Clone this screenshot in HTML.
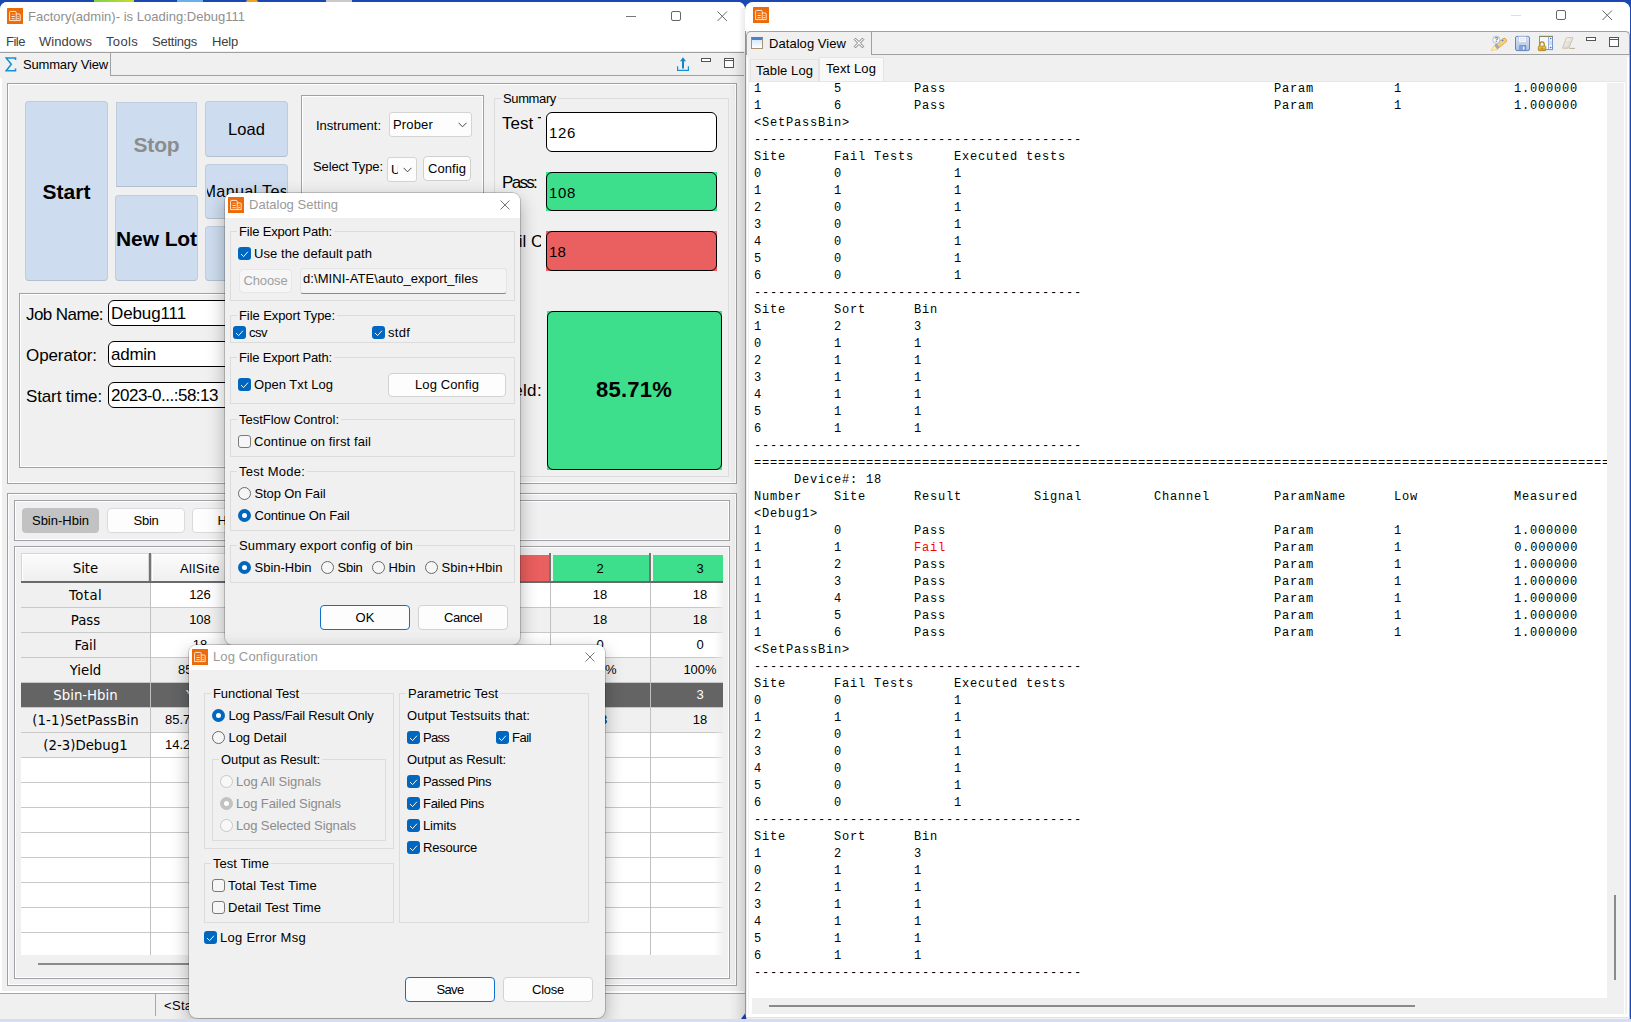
<!DOCTYPE html>
<html><head><meta charset="utf-8"><title>Factory</title>
<style>
html,body{margin:0;padding:0;}
body{width:1631px;height:1022px;position:relative;overflow:hidden;background:#1b47b3;font-family:"Liberation Sans",sans-serif;}
div,span.t,svg.a,pre{position:absolute;}
span.t{white-space:pre;display:block;}
pre{margin:0;}
</style></head><body>
<div style="left:0px;top:2px;width:745px;height:1017px;background:#f0f0f0;border-radius:7px 7px 0 0;overflow:hidden;"></div>
<div style="left:0px;top:78px;width:2px;height:915px;background:#fff;"></div>
<div style="left:0px;top:991px;width:744px;height:2px;background:#fff;"></div>
<div style="left:0px;top:2px;width:745px;height:49px;background:#fff;border-radius:7px 7px 0 0;"></div>
<svg class="a" style="left:7px;top:8px" width="16" height="16" viewBox="0 0 16 16"><rect width="16" height="16" rx="0.6" fill="#ec6a08"/><path d="M3.6 3.4h4.6q1 0 1 1v8.2h-6.6v-8.2q0-1 1-1zM9.2 6h3q1 0 1 1v5.6h-4" fill="none" stroke="#fff" stroke-opacity="0.92" stroke-width="0.9"/><path d="M4.5 6.3h3.2" stroke="#fff" stroke-opacity="0.45" stroke-width="0.9" fill="none"/><path d="M4.5 8.5h3.2M4.5 10.7h3.2M10.2 10.7h2" stroke="#fff" stroke-width="0.9" fill="none"/><path d="M10.2 8.6h2" stroke="#fff" stroke-opacity="0.6" stroke-width="0.8" fill="none"/></svg>
<span class="t" style="top:7.50px;line-height:18px;font-size:13px;color:#8f8f8f;letter-spacing:0.020px;left:28px;">Factory(admin)- is Loading:Debug111</span>
<svg class="a" style="left:626px;top:11px" width="102" height="11" viewBox="0 0 102 11"><path d="M0 5.5h10" stroke="#777" fill="none"/><rect x="45.5" y="0.5" width="9" height="9" rx="1.5" stroke="#666" fill="none"/><path d="M91.5 0.5l9.5 9.5M101 0.5l-9.5 9.5" stroke="#666" fill="none"/></svg>
<span class="t" style="top:32.50px;line-height:18px;font-size:13px;color:#404040;letter-spacing:-0.487px;left:6px;">File</span>
<span class="t" style="top:32.50px;line-height:18px;font-size:13px;color:#404040;letter-spacing:0.038px;left:39px;">Windows</span>
<span class="t" style="top:32.50px;line-height:18px;font-size:13px;color:#404040;letter-spacing:0.330px;left:106px;">Tools</span>
<span class="t" style="top:32.50px;line-height:18px;font-size:13px;color:#404040;letter-spacing:-0.247px;left:152px;">Settings</span>
<span class="t" style="top:32.50px;line-height:18px;font-size:13px;color:#404040;letter-spacing:-0.184px;left:212px;">Help</span>
<div style="left:0px;top:52px;width:744px;height:1px;background:#a0a0a0;"></div>
<div style="left:0px;top:75px;width:744px;height:1px;background:#a0a0a0;"></div>
<div style="left:0px;top:53px;width:111px;height:23px;background:#f0f0f0;border-right:1px solid #a0a0a0;box-sizing:border-box;"></div>
<svg class="a" style="left:5px;top:57px" width="12" height="15" viewBox="0 0 12 15"><path d="M10.5 3V1H1.2L6.3 7.3L1.2 13.8H10.5V11.6" fill="none" stroke="#1793d1" stroke-width="1.6"/></svg>
<span class="t" style="top:55.50px;line-height:18px;font-size:13px;color:#000;letter-spacing:-0.181px;left:23px;">Summary View</span>
<svg class="a" style="left:676px;top:56px" width="14" height="16" viewBox="0 0 14 16"><path d="M1.6 10.3v4.1h10.8v-4.1" fill="none" stroke="#1590d3" stroke-width="1.2"/><path d="M7 12.4V3.5" stroke="#0f86cc" stroke-width="2"/><path d="M4 5.3L7 1.2l3 4.1z" fill="#0f86cc"/></svg>
<div style="left:701px;top:58px;width:10px;height:4px;background:#fff;border:1px solid #555;box-sizing:border-box;"></div>
<div style="left:724px;top:58px;width:10px;height:10px;background:#fff;border:1px solid #555;box-sizing:border-box;"></div>
<div style="left:725px;top:60px;width:8px;height:1px;background:#555;"></div>
<div style="left:7px;top:83px;width:730px;height:401px;border:1px solid #a0a0a6;box-shadow:inset 0 0 0 1px #fff;box-sizing:border-box;"></div>
<div style="left:25px;top:101px;width:83px;height:180px;background:#cddcee;border-radius:4px;border:1px solid rgba(0,0,0,0.07);border-bottom-color:rgba(0,0,0,0.13);box-sizing:border-box;"></div>
<span class="t" style="top:176.50px;line-height:29px;font-size:21px;color:#000;letter-spacing:-0.009px;font-weight:bold;left:-133.5px;width:400px;text-align:center;">Start</span>
<div style="left:116px;top:102px;width:81px;height:85px;background:#cddcee;border-radius:4px;border:1px solid rgba(0,0,0,0.07);border-bottom-color:rgba(0,0,0,0.13);box-sizing:border-box;border-radius:0;"></div>
<span class="t" style="top:129.50px;line-height:29px;font-size:21px;color:#8c8c8c;letter-spacing:-0.164px;font-weight:bold;left:-43.5px;width:400px;text-align:center;">Stop</span>
<div style="left:115px;top:195px;width:83px;height:86px;background:#cddcee;border-radius:4px;border:1px solid rgba(0,0,0,0.07);border-bottom-color:rgba(0,0,0,0.13);box-sizing:border-box;overflow:hidden;"></div>
<span class="t" style="top:223.50px;line-height:29px;font-size:21px;color:#000;letter-spacing:-0.095px;font-weight:bold;left:-43.5px;width:400px;text-align:center;">New Lot</span>
<div style="left:205px;top:101px;width:83px;height:56px;background:#cddcee;border-radius:4px;border:1px solid rgba(0,0,0,0.07);border-bottom-color:rgba(0,0,0,0.13);box-sizing:border-box;"></div>
<span class="t" style="top:117.50px;line-height:23px;font-size:16.5px;color:#000;letter-spacing:0.073px;left:46.5px;width:400px;text-align:center;">Load</span>
<div style="left:205px;top:164px;width:83px;height:55px;background:#cddcee;border-radius:4px;border:1px solid rgba(0,0,0,0.07);border-bottom-color:rgba(0,0,0,0.13);box-sizing:border-box;"></div>
<div style="left:207px;top:164px;width:79px;height:55px;overflow:hidden;"><span class="t" style="left:-4.5px;top:15.5px;line-height:22px;font-size:16.2px;letter-spacing:0.32px;">Manual Test</span></div>
<div style="left:205px;top:226px;width:83px;height:55px;background:#cddcee;border-radius:4px;border:1px solid rgba(0,0,0,0.07);border-bottom-color:rgba(0,0,0,0.13);box-sizing:border-box;"></div>
<div style="left:301px;top:95px;width:183px;height:200px;border:1px solid #a0a0a6;box-shadow:inset 0 0 0 1px #fff;box-sizing:border-box;"></div>
<span class="t" style="top:116.50px;line-height:18px;font-size:13px;color:#000;letter-spacing:-0.002px;left:316px;">Instrument:</span>
<div style="left:389px;top:112px;width:83px;height:25px;background:#fdfdfd;border:1px solid #d4d4d4;border-radius:3px;box-sizing:border-box;"></div>
<span class="t" style="top:116.00px;line-height:18px;font-size:13px;color:#000;letter-spacing:0.163px;left:393px;">Prober</span>
<svg class="a" style="left:458px;top:122px" width="9" height="6" viewBox="0 0 9 6"><path d="M0.5 0.8L4.5 4.8L8.5 0.8" fill="none" stroke="#444" stroke-width="1"/></svg>
<span class="t" style="top:157.50px;line-height:18px;font-size:13px;color:#000;letter-spacing:-0.109px;left:313px;">Select Type:</span>
<div style="left:387px;top:157px;width:30px;height:25px;background:#fdfdfd;border:1px solid #d4d4d4;border-radius:3px;box-sizing:border-box;overflow:hidden;"><span class="t" style="left:3px;top:3px;line-height:18px;font-size:13px;width:7px;overflow:hidden;">U</span></div>
<svg class="a" style="left:403px;top:167px" width="9" height="6" viewBox="0 0 9 6"><path d="M0.5 0.8L4.5 4.8L8.5 0.8" fill="none" stroke="#444" stroke-width="1"/></svg>
<div style="left:423px;top:156px;width:48px;height:25px;background:#fdfdfd;border:1px solid #d0d0d0;border-radius:4px;box-sizing:border-box;"></div>
<span class="t" style="top:159.50px;line-height:18px;font-size:13px;color:#000;letter-spacing:0.070px;left:247.0px;width:400px;text-align:center;">Config</span>
<div style="left:494px;top:98px;width:235px;height:379px;border:1px solid #dcdcdc;box-sizing:border-box;"></div>
<div style="left:501px;top:90px;width:57px;height:16px;background:#f0f0f0;"></div>
<span class="t" style="top:89.70px;line-height:18px;font-size:13px;color:#000;letter-spacing:-0.374px;left:503px;">Summary</span>
<span class="t" style="top:111.50px;line-height:24px;font-size:17px;color:#000;left:502px;width:39px;overflow:hidden;">Test Total:</span>
<div style="left:546px;top:112px;width:171px;height:40px;background:#fff;border:1px solid #000;border-radius:6px;box-sizing:border-box;"></div>
<span class="t" style="top:122.00px;line-height:21px;font-size:15px;color:#000;letter-spacing:0.658px;left:549px;">126</span>
<span class="t" style="top:171.00px;line-height:24px;font-size:17px;color:#000;letter-spacing:-1.703px;left:502px;">Pass:</span>
<div style="left:546px;top:172px;width:171px;height:39px;background:#3ddf8c;"></div>
<div style="left:546px;top:172px;width:171px;height:39px;border:1px solid #000;border-radius:6px;box-sizing:border-box;"></div>
<span class="t" style="top:181.50px;line-height:21px;font-size:15px;color:#000;letter-spacing:0.658px;left:549px;">108</span>
<span class="t" style="top:229.50px;line-height:24px;font-size:17px;color:#000;left:499px;width:42px;overflow:hidden;">Fail Count:</span>
<div style="left:546px;top:231px;width:171px;height:40px;background:#ea5f5f;"></div>
<div style="left:546px;top:231px;width:171px;height:40px;border:1px solid #000;border-radius:6px;box-sizing:border-box;"></div>
<span class="t" style="top:241.00px;line-height:21px;font-size:15px;color:#000;letter-spacing:0.158px;left:549px;">18</span>
<span class="t" style="top:378.50px;line-height:24px;font-size:17px;color:#000;letter-spacing:0.351px;left:498px;">Yield:</span>
<div style="left:547px;top:311px;width:175px;height:159px;background:#3ddf8c;"></div>
<div style="left:547px;top:311px;width:175px;height:159px;border:1px solid #000;border-radius:6px;box-sizing:border-box;"></div>
<span class="t" style="top:374.00px;line-height:31px;font-size:22px;color:#000;letter-spacing:0.231px;font-weight:bold;left:434px;width:400px;text-align:center;">85.71%</span>
<div style="left:19px;top:293px;width:480px;height:175px;border:1px solid #a0a0a6;box-shadow:inset 0 0 0 1px #fff;box-sizing:border-box;"></div>
<span class="t" style="top:302.60px;line-height:24px;font-size:17px;color:#000;letter-spacing:-0.578px;left:26px;">Job Name:</span>
<div style="left:108px;top:300px;width:200px;height:26px;background:#fff;border:1px solid #000;border-radius:6px;box-sizing:border-box;"></div>
<span class="t" style="top:302.10px;line-height:24px;font-size:17px;color:#000;letter-spacing:-0.117px;left:111px;">Debug111</span>
<span class="t" style="top:343.60px;line-height:24px;font-size:17px;color:#000;letter-spacing:-0.090px;left:26px;">Operator:</span>
<div style="left:108px;top:341px;width:200px;height:26px;background:#fff;border:1px solid #000;border-radius:6px;box-sizing:border-box;"></div>
<span class="t" style="top:343.10px;line-height:24px;font-size:17px;color:#000;letter-spacing:-0.260px;left:111px;">admin</span>
<span class="t" style="top:384.60px;line-height:24px;font-size:17px;color:#000;letter-spacing:-0.133px;left:26px;">Start time:</span>
<div style="left:108px;top:382px;width:200px;height:26px;background:#fff;border:1px solid #000;border-radius:6px;box-sizing:border-box;"></div>
<span class="t" style="top:384.10px;line-height:24px;font-size:17px;color:#000;letter-spacing:-0.491px;left:111px;">2023-0...:58:13</span>
<div style="left:7px;top:493px;width:730px;height:493px;border:1px solid #a0a0a6;box-shadow:inset 0 0 0 1px #fff;box-sizing:border-box;"></div>
<div style="left:14px;top:500px;width:716px;height:41px;border:1px solid #a0a0a6;box-shadow:inset 0 0 0 1px #fff;box-sizing:border-box;"></div>
<div style="left:22px;top:508px;width:77px;height:25px;background:#c2c2c2;border-radius:4px;"></div>
<span class="t" style="top:511.50px;line-height:18px;font-size:13px;color:#000;letter-spacing:-0.009px;left:-139.5px;width:400px;text-align:center;">Sbin-Hbin</span>
<div style="left:107px;top:508px;width:78px;height:25px;background:#fdfdfd;border:1px solid #dadada;border-radius:4px;box-sizing:border-box;"></div>
<span class="t" style="top:511.50px;line-height:18px;font-size:13px;color:#000;letter-spacing:-0.255px;left:-54.0px;width:400px;text-align:center;">Sbin</span>
<div style="left:192px;top:508px;width:78px;height:25px;background:#fdfdfd;border:1px solid #dadada;border-radius:4px;box-sizing:border-box;"></div>
<span class="t" style="top:511.50px;line-height:18px;font-size:13px;color:#000;letter-spacing:0.066px;left:31.0px;width:400px;text-align:center;">Hbin</span>
<div style="left:14px;top:546px;width:716px;height:433px;border:1px solid #a0a0a6;box-shadow:inset 0 0 0 1px #fff;box-sizing:border-box;"></div>
<div style="left:21px;top:553px;width:702px;height:402px;background:#fff;"></div>
<div style="left:21px;top:553px;width:702px;height:29px;background:#f0f0f0;"></div>
<div style="left:21px;top:553px;width:128px;height:28px;background:linear-gradient(#fcfcfc,#efefef);border:1px solid #d6d6d6;border-bottom:none;box-shadow:inset 1px 1px 0 #fff;box-sizing:border-box;"></div>
<div style="left:151px;top:553px;width:98px;height:28px;background:linear-gradient(#fcfcfc,#efefef);border:1px solid #d6d6d6;border-bottom:none;box-shadow:inset 1px 1px 0 #fff;box-sizing:border-box;"></div>
<div style="left:252px;top:555px;width:97px;height:26px;background:#ea5f5f;"></div>
<div style="left:352px;top:555px;width:97px;height:26px;background:#ea5f5f;"></div>
<div style="left:452px;top:555px;width:97px;height:26px;background:#ea5f5f;"></div>
<div style="left:553px;top:555px;width:96px;height:26px;background:#3ddf8c;"></div>
<div style="left:653px;top:555px;width:70px;height:26px;background:#3ddf8c;"></div>
<div style="left:149px;top:553px;width:2px;height:29px;background:#747474;"></div>
<div style="left:249px;top:553px;width:2px;height:29px;background:#747474;"></div>
<div style="left:349px;top:553px;width:2px;height:29px;background:#747474;"></div>
<div style="left:449px;top:553px;width:2px;height:29px;background:#747474;"></div>
<div style="left:549px;top:553px;width:2px;height:29px;background:#747474;"></div>
<div style="left:649px;top:553px;width:2px;height:29px;background:#747474;"></div>
<div style="left:21px;top:581px;width:702px;height:2px;background:#6a6a6a;"></div>
<span class="t" style="top:559.30px;line-height:19px;font-size:13.3px;color:#000;font-family:'DejaVu Sans','Liberation Sans',sans-serif;left:-114.5px;width:400px;text-align:center;">Site</span>
<span class="t" style="top:560.00px;line-height:18px;font-size:13px;color:#000;letter-spacing:0.450px;left:0px;width:400px;text-align:center;">AllSite</span>
<span class="t" style="top:560.00px;line-height:18px;font-size:13px;color:#000;left:400px;width:400px;text-align:center;">2</span>
<span class="t" style="top:560.00px;line-height:18px;font-size:13px;color:#000;left:500px;width:400px;text-align:center;">3</span>
<div style="left:21px;top:583px;width:129px;height:24px;background:#f0f0f0;"></div>
<span class="t" style="top:585.80px;line-height:19px;font-size:13.3px;color:#000;font-family:'DejaVu Sans','Liberation Sans',sans-serif;letter-spacing:0.388px;left:-114.5px;width:400px;text-align:center;">Total</span>
<span class="t" style="top:585.70px;line-height:18px;font-size:13px;color:#000;left:0px;width:400px;text-align:center;">126</span>
<span class="t" style="top:585.70px;line-height:18px;font-size:13px;color:#000;left:400px;width:400px;text-align:center;">18</span>
<span class="t" style="top:585.70px;line-height:18px;font-size:13px;color:#000;left:500px;width:400px;text-align:center;">18</span>
<div style="left:150px;top:608px;width:573px;height:24px;background:#f0f0f0;"></div>
<div style="left:21px;top:608px;width:129px;height:24px;background:#f0f0f0;"></div>
<span class="t" style="top:610.80px;line-height:19px;font-size:13.3px;color:#000;font-family:'DejaVu Sans','Liberation Sans',sans-serif;left:-114.5px;width:400px;text-align:center;">Pass</span>
<span class="t" style="top:610.70px;line-height:18px;font-size:13px;color:#000;left:0px;width:400px;text-align:center;">108</span>
<span class="t" style="top:610.70px;line-height:18px;font-size:13px;color:#000;left:400px;width:400px;text-align:center;">18</span>
<span class="t" style="top:610.70px;line-height:18px;font-size:13px;color:#000;left:500px;width:400px;text-align:center;">18</span>
<div style="left:21px;top:633px;width:129px;height:24px;background:#f0f0f0;"></div>
<span class="t" style="top:635.80px;line-height:19px;font-size:13.3px;color:#000;font-family:'DejaVu Sans','Liberation Sans',sans-serif;left:-114.5px;width:400px;text-align:center;">Fail</span>
<span class="t" style="top:635.70px;line-height:18px;font-size:13px;color:#000;left:0px;width:400px;text-align:center;">18</span>
<span class="t" style="top:635.70px;line-height:18px;font-size:13px;color:#000;left:400px;width:400px;text-align:center;">0</span>
<span class="t" style="top:635.70px;line-height:18px;font-size:13px;color:#000;left:500px;width:400px;text-align:center;">0</span>
<div style="left:150px;top:658px;width:573px;height:24px;background:#f0f0f0;"></div>
<div style="left:21px;top:658px;width:129px;height:24px;background:#f0f0f0;"></div>
<span class="t" style="top:660.80px;line-height:19px;font-size:13.3px;color:#000;font-family:'DejaVu Sans','Liberation Sans',sans-serif;left:-114.5px;width:400px;text-align:center;">Yield</span>
<span class="t" style="top:660.70px;line-height:18px;font-size:13px;color:#000;left:0px;width:400px;text-align:center;">85.71%</span>
<span class="t" style="top:660.70px;line-height:18px;font-size:13px;color:#000;left:400px;width:400px;text-align:center;">100%</span>
<span class="t" style="top:660.70px;line-height:18px;font-size:13px;color:#000;left:500px;width:400px;text-align:center;">100%</span>
<div style="left:21px;top:683px;width:702px;height:24px;background:#646464;"></div>
<span class="t" style="top:685.80px;line-height:19px;font-size:13.3px;color:#fff;font-family:'DejaVu Sans','Liberation Sans',sans-serif;left:-114.5px;width:400px;text-align:center;">Sbin-Hbin</span>
<span class="t" style="top:685.70px;line-height:18px;font-size:13px;color:#fff;left:0px;width:400px;text-align:center;">Yield</span>
<span class="t" style="top:685.70px;line-height:18px;font-size:13px;color:#fff;left:400px;width:400px;text-align:center;">2</span>
<span class="t" style="top:685.70px;line-height:18px;font-size:13px;color:#fff;left:500px;width:400px;text-align:center;">3</span>
<div style="left:150px;top:708px;width:573px;height:24px;background:#f0f0f0;"></div>
<div style="left:21px;top:708px;width:129px;height:24px;background:#f0f0f0;"></div>
<span class="t" style="top:710.80px;line-height:19px;font-size:13.3px;color:#000;font-family:'DejaVu Sans','Liberation Sans',sans-serif;letter-spacing:0.132px;left:-114.5px;width:400px;text-align:center;">(1-1)SetPassBin</span>
<span class="t" style="top:710.70px;line-height:18px;font-size:13px;color:#000;left:165px;">85.71%(108)</span>
<span class="t" style="top:710.70px;line-height:18px;font-size:13px;color:#000;left:400px;width:400px;text-align:center;">18</span>
<span class="t" style="top:710.70px;line-height:18px;font-size:13px;color:#000;left:500px;width:400px;text-align:center;">18</span>
<div style="left:21px;top:733px;width:129px;height:24px;background:#f0f0f0;"></div>
<span class="t" style="top:735.80px;line-height:19px;font-size:13.3px;color:#000;font-family:'DejaVu Sans','Liberation Sans',sans-serif;left:-114.5px;width:400px;text-align:center;">(2-3)Debug1</span>
<span class="t" style="top:735.70px;line-height:18px;font-size:13px;color:#000;left:165px;">14.29%(18)</span>
<span class="t" style="top:735.70px;line-height:18px;font-size:13px;color:#000;left:400px;width:400px;text-align:center;"></span>
<span class="t" style="top:735.70px;line-height:18px;font-size:13px;color:#000;left:500px;width:400px;text-align:center;"></span>
<div style="left:21px;top:607px;width:702px;height:1px;background:#c8c8c8;"></div>
<div style="left:21px;top:632px;width:702px;height:1px;background:#c8c8c8;"></div>
<div style="left:21px;top:657px;width:702px;height:1px;background:#c8c8c8;"></div>
<div style="left:21px;top:682px;width:702px;height:1px;background:#c8c8c8;"></div>
<div style="left:21px;top:707px;width:702px;height:1px;background:#c8c8c8;"></div>
<div style="left:21px;top:732px;width:702px;height:1px;background:#c8c8c8;"></div>
<div style="left:21px;top:757px;width:702px;height:1px;background:#c8c8c8;"></div>
<div style="left:21px;top:782px;width:702px;height:1px;background:#c8c8c8;"></div>
<div style="left:21px;top:807px;width:702px;height:1px;background:#c8c8c8;"></div>
<div style="left:21px;top:832px;width:702px;height:1px;background:#c8c8c8;"></div>
<div style="left:21px;top:857px;width:702px;height:1px;background:#c8c8c8;"></div>
<div style="left:21px;top:882px;width:702px;height:1px;background:#c8c8c8;"></div>
<div style="left:21px;top:907px;width:702px;height:1px;background:#c8c8c8;"></div>
<div style="left:21px;top:932px;width:702px;height:1px;background:#c8c8c8;"></div>
<div style="left:150px;top:583px;width:1px;height:372px;background:#c0c0c0;"></div>
<div style="left:250px;top:583px;width:1px;height:372px;background:#c0c0c0;"></div>
<div style="left:350px;top:583px;width:1px;height:372px;background:#c0c0c0;"></div>
<div style="left:450px;top:583px;width:1px;height:372px;background:#c0c0c0;"></div>
<div style="left:550px;top:583px;width:1px;height:372px;background:#c0c0c0;"></div>
<div style="left:650px;top:583px;width:1px;height:372px;background:#c0c0c0;"></div>
<div style="left:714px;top:583px;width:9px;height:99px;background:linear-gradient(90deg,rgba(236,236,236,0),rgba(236,236,236,0.75));"></div>
<div style="left:714px;top:708px;width:9px;height:247px;background:linear-gradient(90deg,rgba(236,236,236,0),rgba(236,236,236,0.75));"></div>
<div style="left:38px;top:963px;width:560px;height:2px;background:#8a8a8a;"></div>
<div style="left:0px;top:993px;width:745px;height:1px;background:#a6a6a6;"></div>
<div style="left:155px;top:994px;width:1px;height:22px;background:#a8a8a8;"></div>
<span class="t" style="top:996.50px;line-height:18px;font-size:13px;color:#000;letter-spacing:0.326px;left:164px;">&lt;Start</span>
<div style="left:728px;top:52px;width:17px;height:967px;background:linear-gradient(90deg,rgba(0,0,0,0),rgba(0,0,0,0.03) 45%,rgba(0,0,0,0.13));"></div>
<div style="left:738px;top:8px;width:7px;height:44px;background:linear-gradient(90deg,rgba(0,0,0,0),rgba(0,0,0,0.08));"></div>
<div style="left:744.5px;top:9px;width:1.5px;height:1010px;background:#949494;"></div>
<div style="left:746px;top:2px;width:884px;height:1017px;background:#f0f0f0;border-radius:8px 8px 0 0;"></div>
<div style="left:745px;top:2px;width:885px;height:29px;background:#fff;border-radius:8px 8px 0 0;"></div>
<svg class="a" style="left:753px;top:7px" width="16" height="16" viewBox="0 0 16 16"><rect width="16" height="16" rx="0.6" fill="#ec6a08"/><path d="M3.6 3.4h4.6q1 0 1 1v8.2h-6.6v-8.2q0-1 1-1zM9.2 6h3q1 0 1 1v5.6h-4" fill="none" stroke="#fff" stroke-opacity="0.92" stroke-width="0.9"/><path d="M4.5 6.3h3.2" stroke="#fff" stroke-opacity="0.45" stroke-width="0.9" fill="none"/><path d="M4.5 8.5h3.2M4.5 10.7h3.2M10.2 10.7h2" stroke="#fff" stroke-width="0.9" fill="none"/><path d="M10.2 8.6h2" stroke="#fff" stroke-opacity="0.6" stroke-width="0.8" fill="none"/></svg>
<svg class="a" style="left:1511px;top:10px" width="102" height="11" viewBox="0 0 102 11"><path d="M0 5.5h10" stroke="#ddd" fill="none"/><rect x="45.5" y="0.5" width="9" height="9" rx="1.5" stroke="#666" fill="none"/><path d="M91.5 0.5l9.5 9.5M101 0.5l-9.5 9.5" stroke="#666" fill="none"/></svg>
<div style="left:746px;top:31px;width:884px;height:24px;border:1px solid #a0a0a0;border-bottom:none;border-radius:5px 5px 0 0;box-sizing:border-box;"></div>
<div style="left:871px;top:54px;width:759px;height:1px;background:#a0a0a0;"></div>
<div style="left:871px;top:32px;width:1px;height:23px;background:#a0a0a0;"></div>
<div style="left:1629px;top:55px;width:1px;height:964px;background:#b4b4b4;"></div>
<div style="left:751px;top:37px;width:12px;height:12px;background:linear-gradient(#d5ebff,#fff);border:1px solid #a79472;border-top:3px solid #4d80c6;box-sizing:border-box;"></div>
<span class="t" style="top:34.50px;line-height:18px;font-size:13px;color:#000;letter-spacing:0.053px;left:769px;">Datalog View</span>
<svg class="a" style="left:853px;top:37px" width="12" height="12" viewBox="0 0 12 12"><path d="M1.2 2.6L2.6 1.2L6 4.6L9.4 1.2L10.8 2.6L7.4 6L10.8 9.4L9.4 10.8L6 7.4L2.6 10.8L1.2 9.4L4.6 6z" fill="#fafafa" stroke="#6a6a6a" stroke-width="0.9" stroke-linejoin="round"/></svg>
<svg class="a" style="left:1490px;top:35px" width="90" height="18" viewBox="0 0 90 18"><defs><linearGradient id="gsv" x1="0" y1="0" x2="0" y2="1"><stop offset="0" stop-color="#dbe6f6"/><stop offset="1" stop-color="#a9c0e6"/></linearGradient><linearGradient id="ger" x1="0" y1="0" x2="1" y2="1"><stop offset="0" stop-color="#fdfcfa"/><stop offset="1" stop-color="#d6cdbf"/></linearGradient><linearGradient id="glk" x1="0" y1="0" x2="0" y2="1"><stop offset="0" stop-color="#f0cf60"/><stop offset="1" stop-color="#c9961a"/></linearGradient></defs><path d="M8 10.6L14.2 5.6" stroke="#d9a648" stroke-width="5.2" stroke-linecap="round" fill="none"/><path d="M8 10.6L14.2 5.6" stroke="#f6cf78" stroke-width="3.6" stroke-linecap="round" fill="none"/><path d="M5.7 12.5L8.2 10.5" stroke="#a9a5ab" stroke-width="5" fill="none"/><path d="M1.2 15.6L4.2 10.4L7.4 14.4z" fill="#fff0b8" stroke="#f0c050" stroke-width="0.6"/><circle cx="12.6" cy="5.5" r="0.8" fill="#4a78c8"/><circle cx="6.3" cy="4.8" r="3.6" fill="#fdfdff" stroke="#9fb0cc" stroke-width="0.8"/><text x="6.3" y="7.3" font-size="6.8" font-family="Liberation Sans,sans-serif" font-weight="bold" text-anchor="middle" fill="#4f6a96">?</text><rect x="25.5" y="1.4" width="14" height="14.2" rx="1.6" fill="url(#gsv)" stroke="#6586c2" stroke-width="1"/><rect x="28.6" y="1.6" width="7.6" height="6" fill="#f6f8fb" stroke="#a9b9d6" stroke-width="0.5"/><path d="M30 3.6h4.8M30 5.2h4.8" stroke="#c8d0dc" stroke-width="0.5"/><rect x="29.8" y="10.6" width="6" height="5" fill="#8aa6d8" stroke="#5e7fba" stroke-width="0.6"/><rect x="33" y="11.6" width="1.3" height="3" fill="#eef3fb"/><rect x="49.5" y="1.4" width="13" height="13.2" fill="#f2f8ff" stroke="#7393c8" stroke-width="1"/><path d="M49 1.4h14" stroke="#8d8452" stroke-width="1"/><path d="M58.6 1.9v12.4" stroke="#7393c8" stroke-width="0.8"/><rect x="59.3" y="5.7" width="2.8" height="4.3" fill="#cfdcf2"/><circle cx="60.7" cy="3.5" r="0.8" fill="#3c6cc0"/><circle cx="60.7" cy="12.5" r="0.8" fill="#3c6cc0"/><path d="M49.9 11.4V9.3a2.15 2.5 0 0 1 4.3 0V11.4" fill="none" stroke="#b58a1c" stroke-width="1.3"/><rect x="48.3" y="11.1" width="7.5" height="4.6" rx="0.9" fill="url(#glk)" stroke="#a97d12" stroke-width="0.7"/><rect x="51.7" y="12.4" width="0.8" height="1.8" fill="#8a640a"/><path d="M72.6 12.8L76.3 3.2Q76.6 2.6 77.3 2.6H82.4Q83.1 2.6 82.8 3.3L79 12.6Q78.7 13.2 78 13.2H73Q72.3 13.2 72.6 12.8z" fill="url(#ger)" stroke="#c3b8a0" stroke-width="0.8"/><path d="M74.8 7.4h6.2" stroke="#d9d2c6" stroke-width="0.5"/><path d="M79.4 13.4h5.4" stroke="#b2a382" stroke-width="0.9"/></svg>
<div style="left:1586px;top:37px;width:10px;height:4px;background:#fff;border:1px solid #555;box-sizing:border-box;"></div>
<div style="left:1609px;top:37px;width:10px;height:10px;background:#fff;border:1px solid #555;box-sizing:border-box;"></div>
<div style="left:1610px;top:39px;width:8px;height:1px;background:#555;"></div>
<div style="left:746.5px;top:57px;width:1.5px;height:960px;background:#fff;"></div>
<div style="left:1627px;top:57px;width:2px;height:960px;background:#fff;"></div>
<div style="left:746.5px;top:1014px;width:882px;height:3px;background:#fff;"></div>
<div style="left:746.5px;top:1017px;width:883px;height:1px;background:#e2e2e2;"></div>
<div style="left:750px;top:59px;width:69px;height:23px;border:1px solid #e4e4e4;border-bottom:none;box-sizing:border-box;"></div>
<span class="t" style="top:61.50px;line-height:18px;font-size:13px;color:#000;letter-spacing:0.069px;left:756px;">Table Log</span>
<div style="left:819px;top:57px;width:65px;height:25px;background:#f9f9f9;border:1px solid #e4e4e4;border-bottom:none;box-sizing:border-box;"></div>
<span class="t" style="top:60.00px;line-height:18px;font-size:13px;color:#000;letter-spacing:0.107px;left:826px;">Text Log</span>
<div style="left:749px;top:82px;width:876px;height:934px;background:#fff;"></div>
<div style="left:749px;top:81px;width:876px;height:1px;background:#e6e6e6;"></div>
<div style="left:1607px;top:83px;width:17px;height:915px;background:#f0f0f0;"></div>
<div style="left:752px;top:998px;width:872px;height:16px;background:#f0f0f0;"></div>
<div style="left:749px;top:82px;width:858px;height:916px;overflow:hidden;"><pre style="left:5px;top:-1.2px;font-family:'Liberation Mono',monospace;font-size:12px;letter-spacing:0.8px;line-height:17px;color:#000;">1         5         Pass                                         Param          1              1.000000
1         6         Pass                                         Param          1              1.000000
&lt;SetPassBin&gt;
-----------------------------------------
Site      Fail Tests     Executed tests
0         0              1
1         1              1
2         0              1
3         0              1
4         0              1
5         0              1
6         0              1
-----------------------------------------
Site      Sort      Bin
1         2         3
0         1         1
2         1         1
3         1         1
4         1         1
5         1         1
6         1         1
-----------------------------------------
========================================================================================================================
     Device#: 18
Number    Site      Result         Signal         Channel        ParamName      Low            Measured
&lt;Debug1&gt;
1         0         Pass                                         Param          1              1.000000
1         1         <span style="color:#f00">Fail</span>                                         Param          1              0.000000
1         2         Pass                                         Param          1              1.000000
1         3         Pass                                         Param          1              1.000000
1         4         Pass                                         Param          1              1.000000
1         5         Pass                                         Param          1              1.000000
1         6         Pass                                         Param          1              1.000000
&lt;SetPassBin&gt;
-----------------------------------------
Site      Fail Tests     Executed tests
0         0              1
1         1              1
2         0              1
3         0              1
4         0              1
5         0              1
6         0              1
-----------------------------------------
Site      Sort      Bin
1         2         3
0         1         1
2         1         1
3         1         1
4         1         1
5         1         1
6         1         1
-----------------------------------------</pre></div>
<div style="left:1614px;top:895px;width:2px;height:85px;background:#8a8a8a;"></div>
<div style="left:769px;top:1005px;width:646px;height:2px;background:#8a8a8a;"></div>
<svg class="a" style="left:741px;top:1013px" width="6" height="6" viewBox="0 0 6 6"><path d="M0 6L4 0.5L5.5 6z" fill="#1a3a98"/></svg>
<div style="left:225px;top:193px;width:295px;height:452px;background:#f0f0f0;border-radius:8px;box-shadow:0 6px 18px rgba(0,0,0,0.30),0 0 0 1px rgba(0,0,0,0.18);"></div>
<div style="left:225px;top:193px;width:295px;height:25px;background:#fff;border-radius:8px 8px 0 0;"></div>
<svg class="a" style="left:228px;top:197px" width="16" height="16" viewBox="0 0 16 16"><rect width="16" height="16" rx="0.6" fill="#ec6a08"/><path d="M3.6 3.4h4.6q1 0 1 1v8.2h-6.6v-8.2q0-1 1-1zM9.2 6h3q1 0 1 1v5.6h-4" fill="none" stroke="#fff" stroke-opacity="0.92" stroke-width="0.9"/><path d="M4.5 6.3h3.2" stroke="#fff" stroke-opacity="0.45" stroke-width="0.9" fill="none"/><path d="M4.5 8.5h3.2M4.5 10.7h3.2M10.2 10.7h2" stroke="#fff" stroke-width="0.9" fill="none"/><path d="M10.2 8.6h2" stroke="#fff" stroke-opacity="0.6" stroke-width="0.8" fill="none"/></svg>
<span class="t" style="top:196.00px;line-height:18px;font-size:13px;color:#9a9a9a;letter-spacing:0.007px;left:249px;">Datalog Setting</span>
<svg class="a" style="left:500px;top:200px" width="10" height="10" viewBox="0 0 10 10"><path d="M0.5 0.5L9.5 9.5M9.5 0.5L0.5 9.5" stroke="#777" stroke-width="1" fill="none"/></svg>
<div style="left:230px;top:231px;width:285px;height:70px;border:1px solid #dcdcdc;box-sizing:border-box;"></div>
<div style="left:237px;top:223px;width:97px;height:16px;background:#f0f0f0;"></div>
<span class="t" style="top:222.70px;line-height:18px;font-size:13px;color:#000;letter-spacing:-0.182px;left:239px;">File Export Path:</span>
<div style="left:238px;top:247.0px;width:13px;height:13px;background:#0067c0;border-radius:3px;"><svg width="13" height="13" viewBox="0 0 13 13"><path d="M3.3 6.3 L5.6 8.6 L9.7 4.0" fill="none" stroke="#fff" stroke-width="0.95" stroke-linecap="round" stroke-linejoin="round"/></svg></div>
<span class="t" style="top:244.50px;line-height:18px;font-size:13px;color:#000;letter-spacing:0.082px;left:254px;">Use the default path</span>
<div style="left:239px;top:269px;width:53px;height:24px;background:#f6f6f6;border:1px solid #e6e6e6;border-radius:4px;box-sizing:border-box;"></div>
<span class="t" style="top:272.00px;line-height:18px;font-size:13px;color:#a0a0a0;letter-spacing:-0.135px;left:65.5px;width:400px;text-align:center;">Choose</span>
<div style="left:299.5px;top:267.5px;width:207px;height:26px;background:#f4f4f4;border:1px solid #e4e4e4;border-bottom:1px solid #8a8a8a;border-radius:3px;box-sizing:border-box;"></div>
<span class="t" style="top:270.00px;line-height:18px;font-size:13px;color:#000;letter-spacing:0.063px;left:303px;">d:\MINI-ATE\auto_export_files</span>
<div style="left:230px;top:315px;width:285px;height:28px;border:1px solid #dcdcdc;box-sizing:border-box;"></div>
<div style="left:237px;top:307px;width:100px;height:16px;background:#f0f0f0;"></div>
<span class="t" style="top:306.70px;line-height:18px;font-size:13px;color:#000;letter-spacing:-0.077px;left:239px;">File Export Type:</span>
<div style="left:233px;top:326.0px;width:13px;height:13px;background:#0067c0;border-radius:3px;"><svg width="13" height="13" viewBox="0 0 13 13"><path d="M3.3 6.3 L5.6 8.6 L9.7 4.0" fill="none" stroke="#fff" stroke-width="0.95" stroke-linecap="round" stroke-linejoin="round"/></svg></div>
<span class="t" style="top:323.50px;line-height:18px;font-size:13px;color:#000;letter-spacing:-0.500px;left:249px;">csv</span>
<div style="left:372px;top:326.0px;width:13px;height:13px;background:#0067c0;border-radius:3px;"><svg width="13" height="13" viewBox="0 0 13 13"><path d="M3.3 6.3 L5.6 8.6 L9.7 4.0" fill="none" stroke="#fff" stroke-width="0.95" stroke-linecap="round" stroke-linejoin="round"/></svg></div>
<span class="t" style="top:323.50px;line-height:18px;font-size:13px;color:#000;letter-spacing:0.262px;left:388px;">stdf</span>
<div style="left:230px;top:357px;width:285px;height:47px;border:1px solid #dcdcdc;box-sizing:border-box;"></div>
<div style="left:237px;top:349px;width:97px;height:16px;background:#f0f0f0;"></div>
<span class="t" style="top:348.70px;line-height:18px;font-size:13px;color:#000;letter-spacing:-0.182px;left:239px;">File Export Path:</span>
<div style="left:238px;top:378.0px;width:13px;height:13px;background:#0067c0;border-radius:3px;"><svg width="13" height="13" viewBox="0 0 13 13"><path d="M3.3 6.3 L5.6 8.6 L9.7 4.0" fill="none" stroke="#fff" stroke-width="0.95" stroke-linecap="round" stroke-linejoin="round"/></svg></div>
<span class="t" style="top:375.50px;line-height:18px;font-size:13px;color:#000;letter-spacing:0.039px;left:254px;">Open Txt Log</span>
<div style="left:388px;top:372.5px;width:118px;height:24px;background:#fdfdfd;border:1px solid #d2d2d2;border-radius:4px;box-sizing:border-box;"></div>
<span class="t" style="top:375.50px;line-height:18px;font-size:13px;color:#000;letter-spacing:0.112px;left:247.0px;width:400px;text-align:center;">Log Config</span>
<div style="left:230px;top:419px;width:285px;height:38px;border:1px solid #dcdcdc;box-sizing:border-box;"></div>
<div style="left:237px;top:411px;width:104px;height:16px;background:#f0f0f0;"></div>
<span class="t" style="top:410.70px;line-height:18px;font-size:13px;color:#000;letter-spacing:-0.025px;left:239px;">TestFlow Control:</span>
<div style="left:238px;top:435.0px;width:13px;height:13px;background:#f6f6f6;border:1px solid #7a7a7a;border-radius:3px;box-sizing:border-box;"></div>
<span class="t" style="top:432.50px;line-height:18px;font-size:13px;color:#000;letter-spacing:0.096px;left:254px;">Continue on first fail</span>
<div style="left:230px;top:471px;width:285px;height:60px;border:1px solid #dcdcdc;box-sizing:border-box;"></div>
<div style="left:237px;top:463px;width:70px;height:16px;background:#f0f0f0;"></div>
<span class="t" style="top:462.70px;line-height:18px;font-size:13px;color:#000;letter-spacing:0.242px;left:239px;">Test Mode:</span>
<div style="left:238.0px;top:487.0px;width:13px;height:13px;background:#f6f6f6;border:1px solid #6a6a6a;border-radius:50%;box-sizing:border-box;"></div>
<span class="t" style="top:484.50px;line-height:18px;font-size:13px;color:#000;letter-spacing:-0.105px;left:254.5px;">Stop On Fail</span>
<div style="left:238.0px;top:509.0px;width:13px;height:13px;background:#fff;border:4px solid #0067c0;border-radius:50%;box-sizing:border-box;"></div>
<span class="t" style="top:506.50px;line-height:18px;font-size:13px;color:#000;letter-spacing:-0.159px;left:254.5px;">Continue On Fail</span>
<div style="left:230px;top:545px;width:285px;height:38px;border:1px solid #dcdcdc;box-sizing:border-box;"></div>
<div style="left:237px;top:537px;width:178px;height:16px;background:#f0f0f0;"></div>
<span class="t" style="top:536.70px;line-height:18px;font-size:13px;color:#000;letter-spacing:0.176px;left:239px;">Summary export config of bin</span>
<div style="left:238.0px;top:561.0px;width:13px;height:13px;background:#fff;border:4px solid #0067c0;border-radius:50%;box-sizing:border-box;"></div>
<span class="t" style="top:558.50px;line-height:18px;font-size:13px;color:#000;letter-spacing:-0.009px;left:254.5px;">Sbin-Hbin</span>
<div style="left:321.0px;top:561.0px;width:13px;height:13px;background:#f6f6f6;border:1px solid #6a6a6a;border-radius:50%;box-sizing:border-box;"></div>
<span class="t" style="top:558.50px;line-height:18px;font-size:13px;color:#000;letter-spacing:-0.255px;left:337.5px;">Sbin</span>
<div style="left:372.0px;top:561.0px;width:13px;height:13px;background:#f6f6f6;border:1px solid #6a6a6a;border-radius:50%;box-sizing:border-box;"></div>
<span class="t" style="top:558.50px;line-height:18px;font-size:13px;color:#000;letter-spacing:0.066px;left:388.5px;">Hbin</span>
<div style="left:425.0px;top:561.0px;width:13px;height:13px;background:#f6f6f6;border:1px solid #6a6a6a;border-radius:50%;box-sizing:border-box;"></div>
<span class="t" style="top:558.50px;line-height:18px;font-size:13px;color:#000;letter-spacing:0.072px;left:441.5px;">Sbin+Hbin</span>
<div style="left:320px;top:605px;width:90px;height:25px;background:#fdfdfd;border:1px solid #1070d0;border-radius:4px;box-sizing:border-box;"></div>
<span class="t" style="top:608.50px;line-height:18px;font-size:13px;color:#000;letter-spacing:0.109px;left:165.0px;width:400px;text-align:center;">OK</span>
<div style="left:418px;top:605px;width:90px;height:25px;background:#fdfdfd;border:1px solid #d2d2d2;border-radius:4px;box-sizing:border-box;"></div>
<span class="t" style="top:608.50px;line-height:18px;font-size:13px;color:#000;letter-spacing:-0.411px;left:263.0px;width:400px;text-align:center;">Cancel</span>
<div style="left:189px;top:645px;width:416px;height:373px;background:#f0f0f0;border-radius:8px;box-shadow:0 6px 18px rgba(0,0,0,0.30),0 0 0 1px rgba(0,0,0,0.18);"></div>
<div style="left:189px;top:645px;width:416px;height:25px;background:#fff;border-radius:8px 8px 0 0;"></div>
<svg class="a" style="left:192px;top:649px" width="16" height="16" viewBox="0 0 16 16"><rect width="16" height="16" rx="0.6" fill="#ec6a08"/><path d="M3.6 3.4h4.6q1 0 1 1v8.2h-6.6v-8.2q0-1 1-1zM9.2 6h3q1 0 1 1v5.6h-4" fill="none" stroke="#fff" stroke-opacity="0.92" stroke-width="0.9"/><path d="M4.5 6.3h3.2" stroke="#fff" stroke-opacity="0.45" stroke-width="0.9" fill="none"/><path d="M4.5 8.5h3.2M4.5 10.7h3.2M10.2 10.7h2" stroke="#fff" stroke-width="0.9" fill="none"/><path d="M10.2 8.6h2" stroke="#fff" stroke-opacity="0.6" stroke-width="0.8" fill="none"/></svg>
<span class="t" style="top:648.00px;line-height:18px;font-size:13px;color:#9a9a9a;letter-spacing:0.139px;left:213px;">Log Configuration</span>
<svg class="a" style="left:585px;top:652px" width="10" height="10" viewBox="0 0 10 10"><path d="M0.5 0.5L9.5 9.5M9.5 0.5L0.5 9.5" stroke="#777" stroke-width="1" fill="none"/></svg>
<div style="left:204px;top:693px;width:190px;height:156px;border:1px solid #dcdcdc;box-sizing:border-box;"></div>
<div style="left:211px;top:685px;width:90px;height:16px;background:#f0f0f0;"></div>
<span class="t" style="top:684.70px;line-height:18px;font-size:13px;color:#000;letter-spacing:-0.080px;left:213px;">Functional Test</span>
<div style="left:212.0px;top:709.0px;width:13px;height:13px;background:#fff;border:4px solid #0067c0;border-radius:50%;box-sizing:border-box;"></div>
<span class="t" style="top:706.50px;line-height:18px;font-size:13px;color:#000;letter-spacing:-0.183px;left:228.5px;">Log Pass/Fail Result Only</span>
<div style="left:212.0px;top:731.0px;width:13px;height:13px;background:#f6f6f6;border:1px solid #6a6a6a;border-radius:50%;box-sizing:border-box;"></div>
<span class="t" style="top:728.50px;line-height:18px;font-size:13px;color:#000;letter-spacing:-0.054px;left:228.5px;">Log Detail</span>
<div style="left:212px;top:759px;width:174px;height:82px;border:1px solid #dcdcdc;box-sizing:border-box;"></div>
<div style="left:219px;top:751px;width:103px;height:16px;background:#f0f0f0;"></div>
<span class="t" style="top:750.70px;line-height:18px;font-size:13px;color:#000;letter-spacing:-0.085px;left:221px;">Output as Result:</span>
<div style="left:219.5px;top:775.0px;width:13px;height:13px;background:#f8f8f8;border:1px solid #c8c8c8;border-radius:50%;box-sizing:border-box;"></div>
<span class="t" style="top:772.50px;line-height:18px;font-size:13px;color:#8c8c8c;letter-spacing:-0.019px;left:236.0px;">Log All Signals</span>
<div style="left:219.5px;top:797.0px;width:13px;height:13px;background:#fff;border:4px solid #c2c2c2;border-radius:50%;box-sizing:border-box;"></div>
<span class="t" style="top:794.50px;line-height:18px;font-size:13px;color:#8c8c8c;letter-spacing:-0.109px;left:236.0px;">Log Failed Signals</span>
<div style="left:219.5px;top:819.0px;width:13px;height:13px;background:#f8f8f8;border:1px solid #c8c8c8;border-radius:50%;box-sizing:border-box;"></div>
<span class="t" style="top:816.50px;line-height:18px;font-size:13px;color:#8c8c8c;letter-spacing:-0.107px;left:236.0px;">Log Selected Signals</span>
<div style="left:204px;top:863px;width:190px;height:60px;border:1px solid #dcdcdc;box-sizing:border-box;"></div>
<div style="left:211px;top:855px;width:60px;height:16px;background:#f0f0f0;"></div>
<span class="t" style="top:854.70px;line-height:18px;font-size:13px;color:#000;letter-spacing:0.042px;left:213px;">Test Time</span>
<div style="left:212px;top:879.0px;width:13px;height:13px;background:#f6f6f6;border:1px solid #7a7a7a;border-radius:3px;box-sizing:border-box;"></div>
<span class="t" style="top:876.50px;line-height:18px;font-size:13px;color:#000;letter-spacing:0.169px;left:228px;">Total Test Time</span>
<div style="left:212px;top:901.0px;width:13px;height:13px;background:#f6f6f6;border:1px solid #7a7a7a;border-radius:3px;box-sizing:border-box;"></div>
<span class="t" style="top:898.50px;line-height:18px;font-size:13px;color:#000;letter-spacing:0.048px;left:228px;">Detail Test Time</span>
<div style="left:399px;top:693px;width:190px;height:230px;border:1px solid #dcdcdc;box-sizing:border-box;"></div>
<div style="left:406px;top:685px;width:94px;height:16px;background:#f0f0f0;"></div>
<span class="t" style="top:684.70px;line-height:18px;font-size:13px;color:#000;letter-spacing:-0.004px;left:408px;">Parametric Test</span>
<span class="t" style="top:707.00px;line-height:18px;font-size:13px;color:#000;letter-spacing:0.051px;left:407px;">Output Testsuits that:</span>
<div style="left:407px;top:731.0px;width:13px;height:13px;background:#0067c0;border-radius:3px;"><svg width="13" height="13" viewBox="0 0 13 13"><path d="M3.3 6.3 L5.6 8.6 L9.7 4.0" fill="none" stroke="#fff" stroke-width="0.95" stroke-linecap="round" stroke-linejoin="round"/></svg></div>
<span class="t" style="top:728.50px;line-height:18px;font-size:13px;color:#000;letter-spacing:-0.725px;left:423px;">Pass</span>
<div style="left:496px;top:731.0px;width:13px;height:13px;background:#0067c0;border-radius:3px;"><svg width="13" height="13" viewBox="0 0 13 13"><path d="M3.3 6.3 L5.6 8.6 L9.7 4.0" fill="none" stroke="#fff" stroke-width="0.95" stroke-linecap="round" stroke-linejoin="round"/></svg></div>
<span class="t" style="top:728.50px;line-height:18px;font-size:13px;color:#000;letter-spacing:-0.487px;left:512px;">Fail</span>
<span class="t" style="top:751.00px;line-height:18px;font-size:13px;color:#000;letter-spacing:-0.085px;left:407px;">Output as Result:</span>
<div style="left:407px;top:775.0px;width:13px;height:13px;background:#0067c0;border-radius:3px;"><svg width="13" height="13" viewBox="0 0 13 13"><path d="M3.3 6.3 L5.6 8.6 L9.7 4.0" fill="none" stroke="#fff" stroke-width="0.95" stroke-linecap="round" stroke-linejoin="round"/></svg></div>
<span class="t" style="top:772.50px;line-height:18px;font-size:13px;color:#000;letter-spacing:-0.387px;left:423px;">Passed Pins</span>
<div style="left:407px;top:797.0px;width:13px;height:13px;background:#0067c0;border-radius:3px;"><svg width="13" height="13" viewBox="0 0 13 13"><path d="M3.3 6.3 L5.6 8.6 L9.7 4.0" fill="none" stroke="#fff" stroke-width="0.95" stroke-linecap="round" stroke-linejoin="round"/></svg></div>
<span class="t" style="top:794.50px;line-height:18px;font-size:13px;color:#000;letter-spacing:-0.301px;left:423px;">Failed Pins</span>
<div style="left:407px;top:819.0px;width:13px;height:13px;background:#0067c0;border-radius:3px;"><svg width="13" height="13" viewBox="0 0 13 13"><path d="M3.3 6.3 L5.6 8.6 L9.7 4.0" fill="none" stroke="#fff" stroke-width="0.95" stroke-linecap="round" stroke-linejoin="round"/></svg></div>
<span class="t" style="top:816.50px;line-height:18px;font-size:13px;color:#000;letter-spacing:-0.158px;left:423px;">Limits</span>
<div style="left:407px;top:841.0px;width:13px;height:13px;background:#0067c0;border-radius:3px;"><svg width="13" height="13" viewBox="0 0 13 13"><path d="M3.3 6.3 L5.6 8.6 L9.7 4.0" fill="none" stroke="#fff" stroke-width="0.95" stroke-linecap="round" stroke-linejoin="round"/></svg></div>
<span class="t" style="top:838.50px;line-height:18px;font-size:13px;color:#000;letter-spacing:-0.205px;left:423px;">Resource</span>
<div style="left:204px;top:931.0px;width:13px;height:13px;background:#0067c0;border-radius:3px;"><svg width="13" height="13" viewBox="0 0 13 13"><path d="M3.3 6.3 L5.6 8.6 L9.7 4.0" fill="none" stroke="#fff" stroke-width="0.95" stroke-linecap="round" stroke-linejoin="round"/></svg></div>
<span class="t" style="top:928.50px;line-height:18px;font-size:13px;color:#000;letter-spacing:0.280px;left:220px;">Log Error Msg</span>
<div style="left:405px;top:977px;width:90px;height:25px;background:#fdfdfd;border:1px solid #1070d0;border-radius:4px;box-sizing:border-box;"></div>
<span class="t" style="top:980.50px;line-height:18px;font-size:13px;color:#000;letter-spacing:-0.658px;left:250.0px;width:400px;text-align:center;">Save</span>
<div style="left:503px;top:977px;width:90px;height:25px;background:#fdfdfd;border:1px solid #d2d2d2;border-radius:4px;box-sizing:border-box;"></div>
<span class="t" style="top:980.50px;line-height:18px;font-size:13px;color:#000;letter-spacing:-0.247px;left:348.0px;width:400px;text-align:center;">Close</span>
<div style="left:0px;top:1019px;width:1631px;height:3px;background:#d6dcf3;"></div>
<div style="left:94px;top:0px;width:40px;height:2px;background:linear-gradient(90deg,#7ed348,#c9d92e);"></div>
<div style="left:177px;top:0px;width:26px;height:2px;background:#6cb0ea;"></div>
<div style="left:246px;top:0px;width:12px;height:2px;background:#eea321;border-radius:5px 5px 0 0;"></div>
<div style="left:326px;top:0px;width:26px;height:2px;background:#cacaca;"></div>
</body></html>
